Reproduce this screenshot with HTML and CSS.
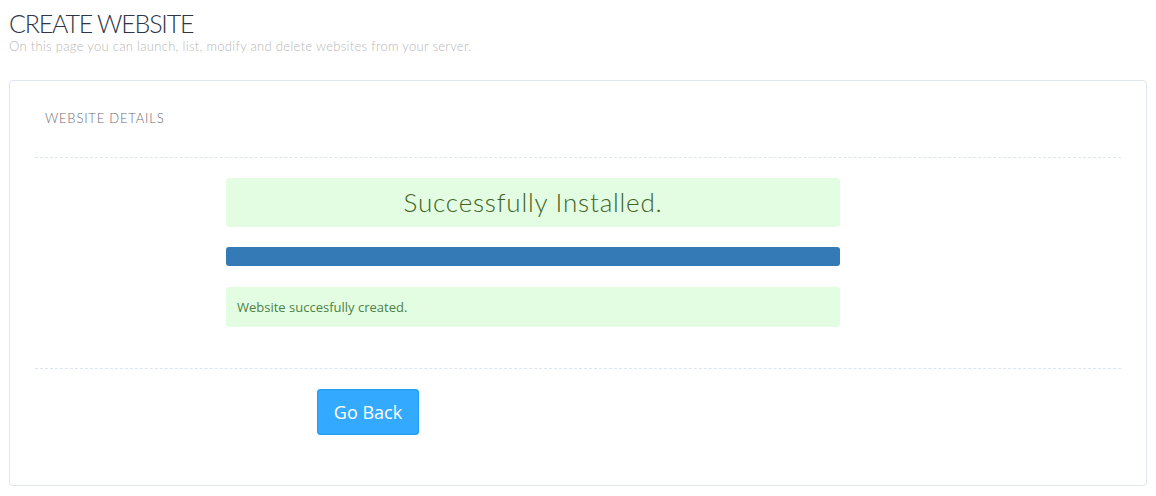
FILE: index.html
```html
<!DOCTYPE html>
<html lang="en">
<head>
    <meta charset="UTF-8">
    <meta name="viewport" content="width=device-width, initial-scale=1.0">
    <title>Create Website</title>
    <link rel="stylesheet" href="styles.css">
</head>
<body>
    <div class="page">
        <div class="pageHead">
            <h2>CREATE WEBSITE</h2>
            <p>On this page you can launch, list, modify and delete websites from your server.</p>
        </div>
        <div class="panel">
            <h3 class="panelTitle">WEBSITE DETAILS</h3>
            <div class="panelBody">
                <div class="statusCol">
                    <div class="alertSuccess bigMsg">Successfully Installed.</div>
                    <div class="progress"><div class="progressBar" style="width: 100%"></div></div>
                    <div class="alertSuccess smallMsg">Website succesfully created.</div>
                </div>
            </div>
            <div class="panelFoot">
                <button class="btnBack" type="button">Go Back</button>
            </div>
        </div>
    </div>
</body>
</html>
```

FILE: styles.css
```css
 /* page wrapper */
 body{
     margin: 0;
     background: #fff;
     font-family: "Lato", "Open Sans", sans-serif;
 }
 .page{
     padding: 8px 9px 10px 9px;
 }
 /* header */
 .pageHead h2{
     margin: 0;
     font-size: 25px;
     line-height: 30px;
     font-weight: 300;
     color: #2e3646;
     letter-spacing: -1.2px;
 }
 .pageHead p{
     margin: 0;
     font-size: 13px;
     line-height: 16px;
     font-weight: 300;
     color: #b8b8b8;
     letter-spacing: 0.3px;
 }
 /* panel */
 .panel{
     margin-top: 26px;
     border: 1px solid #dfe6ee;
     border-radius: 4px;
     padding: 0 25px 0 25px;
     height: 406px;
     box-sizing: border-box;
 }
 .panelTitle{
     margin: 0;
     padding: 28px 0 0 10px;
     height: 77px;
     box-sizing: border-box;
     font-size: 13px;
     line-height: 18px;
     font-weight: 300;
     letter-spacing: 0.8px;
     color: #6d6a78;
     border-bottom: 1px dashed #dde6f0;
 }
 .panelBody{
     border-bottom: 1px dashed #dde6f0;
     padding: 20px 0 41px 191px;
 }
 .statusCol{
     width: 614px;
 }
 .alertSuccess{
     background-color: #e2fde2;
     border-radius: 3px;
     color: #3f6b2a;
 }
 .bigMsg{
     height: 49px;
     line-height: 48px;
     text-align: center;
     font-size: 26px;
     font-weight: 300;
     letter-spacing: 0.8px;
     color: #42621f;
 }
 .progress{
     margin-top: 20px;
     height: 19px;
 }
 .progressBar{
     height: 100%;
     background-color: #337ab7;
     border-radius: 3px;
 }
 .smallMsg{
     margin-top: 21px;
     height: 40px;
     line-height: 40px;
     padding-left: 11px;
     font-family: "Open Sans", sans-serif;
     font-size: 13px;
     color: #4f8146;
 }
 /* footer with button */
 .panelFoot{
     padding: 20px 0 0 282px;
 }
 .btnBack{
     width: 102px;
     height: 46px;
     border: 1px solid #1d9cf2;
     border-radius: 3px;
     background-color: #33aaff;
     color: #fff;
     font-family: "Open Sans", sans-serif;
     font-size: 18px;
     cursor: pointer;
 }
```
